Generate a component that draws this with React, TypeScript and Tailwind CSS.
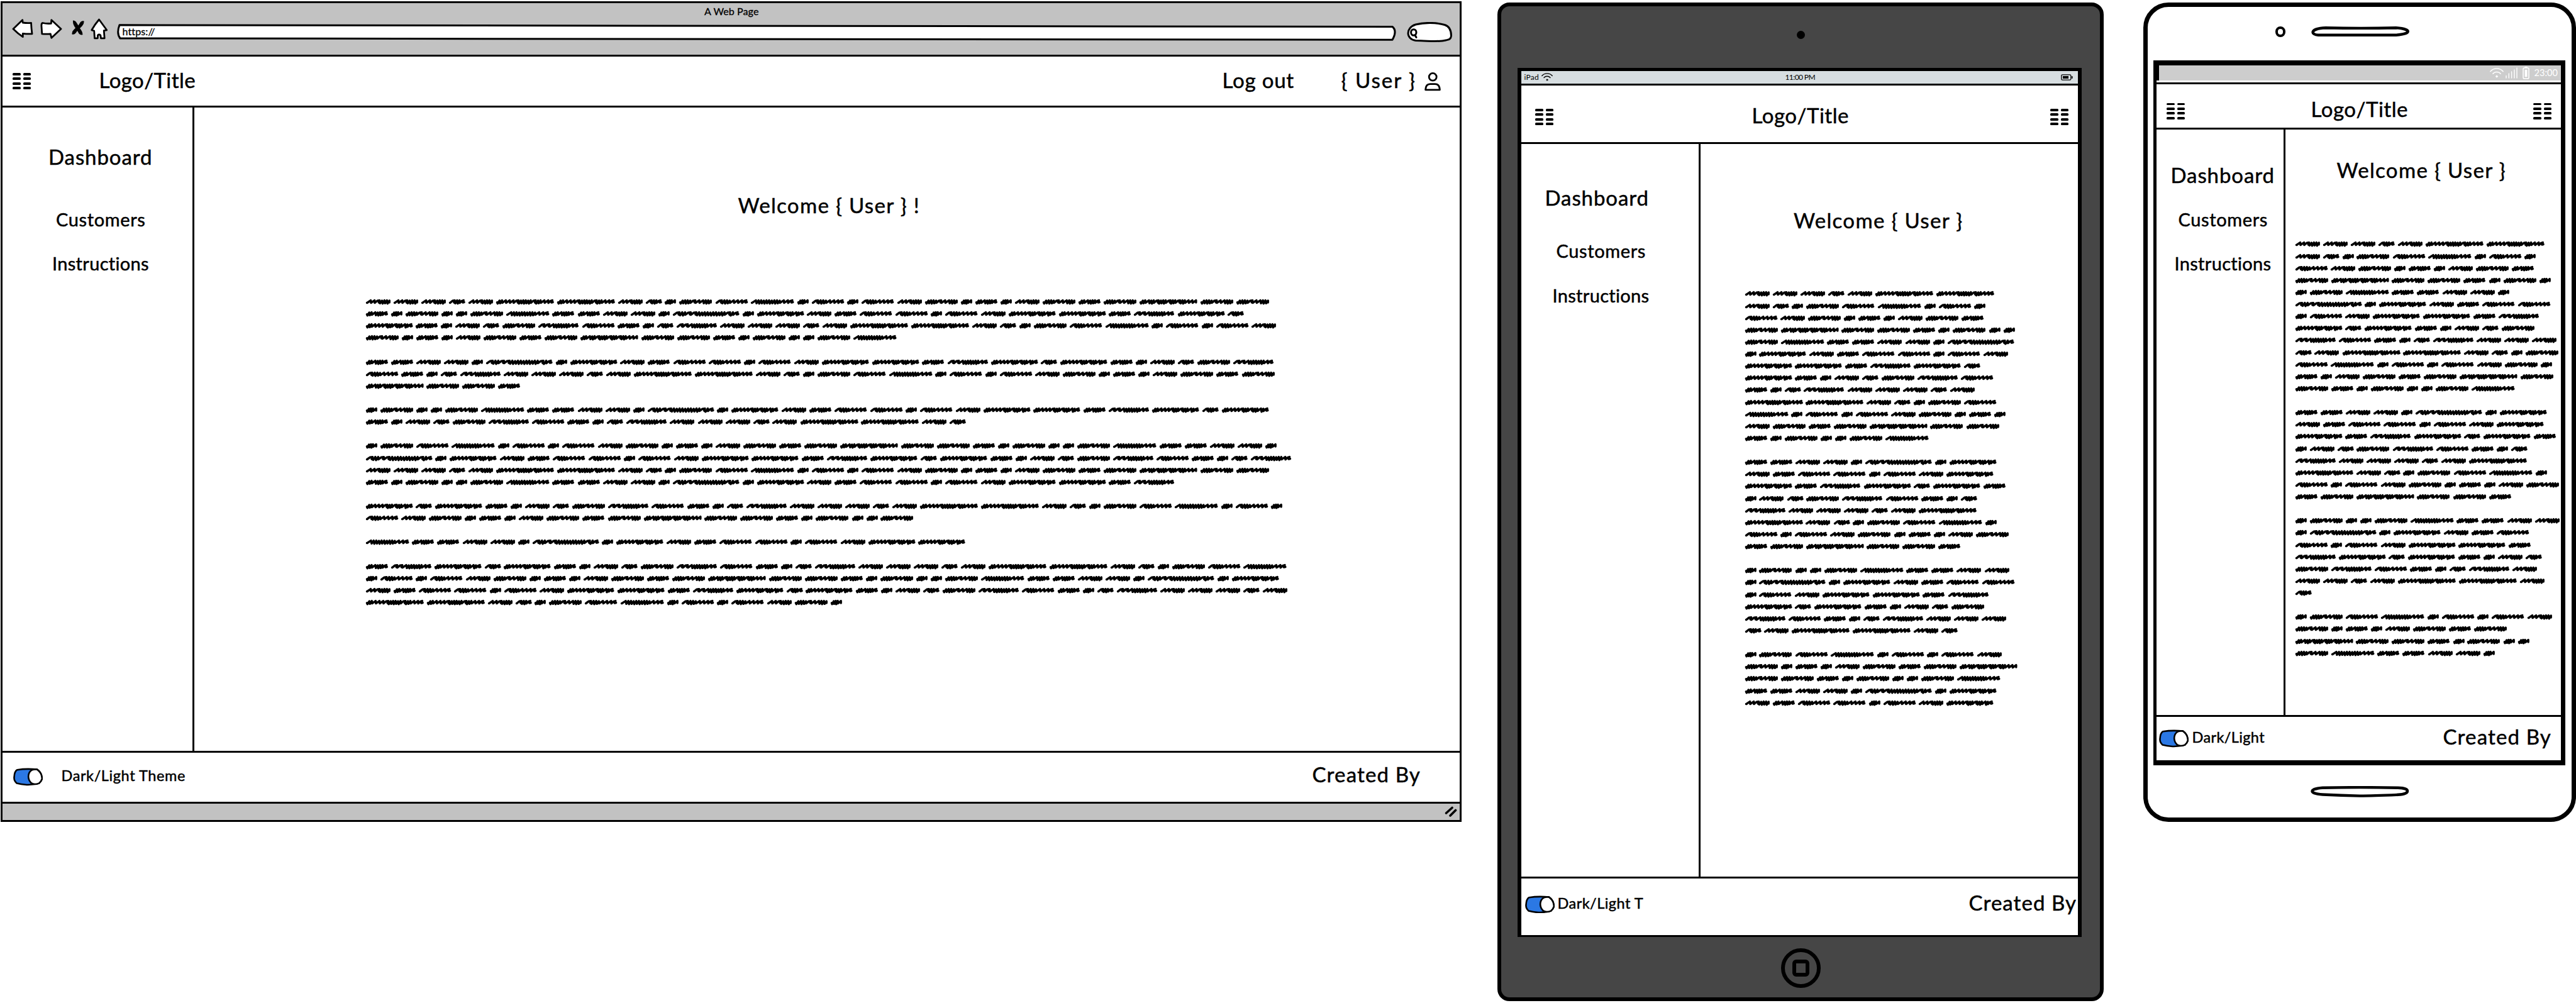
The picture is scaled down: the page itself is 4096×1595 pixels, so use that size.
import { useLayoutEffect, useRef, useState } from "react";
import type { ReactNode } from "react";

/* ---------- text ---------- */

/** A label whose tracking is adjusted so that it spans `w` pixels. */
function Label({ w, className = "", children }: { w: number; className?: string; children: string }) {
  const ref = useRef<HTMLSpanElement>(null);
  const [tracking, setTracking] = useState(0);
  useLayoutEffect(() => {
    const el = ref.current;
    if (!el) return;
    const natural = el.getBoundingClientRect().width - tracking * children.length;
    setTracking((w - natural) / children.length);
  }, [w, children]);
  return (
    <span
      ref={ref}
      className={"inline-block w-max shrink-0 pt-px pl-[1.5px] leading-none whitespace-pre " + className}
      style={{ letterSpacing: tracking + "px" }}
    >
      {children}
    </span>
  );
}

/* ---------- scribbled copy ---------- */

/* n: tight stroke, l: loose slanted stroke, r: flat-topped hump, z: closing hook */
const WORDS: Record<string, { w: number; strokes: string }> = {
  A: { w: 63.8, strokes: "llrnnnn" },
  B: { w: 42, strokes: "rnnz" },
  C: { w: 151.2, strokes: "nnlllrnnnnnrnnllz" },
  D: { w: 29, strokes: "nnnl" },
  E: { w: 85.3, strokes: "nnnnrllnnn" },
  F: { w: 84.3, strokes: "rnnnlllz" },
  G: { w: 112.7, strokes: "lnnnnnnnnnllz" },
  H: { w: 57.3, strokes: "nnlnnnz" },
  J: { w: 150.7, strokes: "nnlnnrnnnrnnrnnlll" },
  K: { w: 122.7, strokes: "nnlllrnnrnnlnz" },
  L: { w: 174, strokes: "rnnrrnnnnnnnnnnrnz" },
  M: { w: 105.3, strokes: "rrlnnnnnnlz" },
};

function scribble(strokes: string, width: number) {
  const step: Record<string, number> = { n: 18, l: 28, r: 36, z: 34 };
  const total = [...strokes].reduce((t, s) => t + step[s], 0);
  const k = (width - 14) / total;
  let x = 0;
  const at = (px: number, y: number) => (7 + px * k).toFixed(1) + " " + y;
  let d = "M" + at(0, strokes[0] === "n" ? 24 : 27);
  let i = 0;
  for (const s of strokes) {
    const dip = i % 2 ? 31 : 33;
    if (s === "n") d += "L" + at(x + 4, dip) + "L" + at(x + 18, i % 3 ? 8 : 10);
    if (s === "l") d += "L" + at(x + 2, 27) + "L" + at(x + 28, 8);
    if (s === "r") d += "L" + at(x + 1, 27) + "L" + at(x + 20, 11) + "L" + at(x + 36, 8) + "L" + at(x + 30, 24);
    if (s === "z") d += "L" + at(x + 1, 28) + "L" + at(x + 16, 13) + "L" + at(x + 30, 8) + "L" + at(x + 24, 25) + "L" + at(x + 34, 22);
    x += step[s];
    i++;
  }
  if (strokes.endsWith("n") || strokes.endsWith("l")) d += "L" + at(x, 25);
  return d;
}

const SHAPES = Object.fromEntries(
  Object.entries(WORDS).map(([k, v]) => [k, { w: v.w, d: scribble(v.strokes, v.w * 3) }]),
);

function Copy({ paragraphs, className = "" }: { paragraphs: string[][]; className?: string }) {
  return (
    <div className={"flex flex-col gap-[19.13px] " + className}>
      {paragraphs.map((lines, p) => (
        <div key={p}>
          {lines.map((line, i) => (
            <div key={i} className="flex h-[19.13px] items-center gap-[5.45px]">
              {[...line].map((c, j) => (
                <svg
                  key={j}
                  className="h-[8.2px] shrink-0 overflow-visible"
                  style={{ width: SHAPES[c].w * 0.60538 }}
                  viewBox={"0 0 " + SHAPES[c].w * 3 + " 40"}
                  preserveAspectRatio="none"
                >
                  <path d={SHAPES[c].d} fill="none" stroke="#000" strokeWidth={17} strokeLinecap="round" strokeLinejoin="round" />
                </svg>
              ))}
            </div>
          ))}
        </div>
      ))}
    </div>
  );
}

const WIDE_COPY = [
  ["AAABACCABDEFGDFDFAEDHDAEHEJEE", "HDEDDEGHHAADLDKAHFFDFAKKHMKB", "KHDABEMFHDBMAAABACCABDEFGDFDFA", "EDHDAEHEJEEHDEDDEG"],
  ["HHAADLDKAHFFDFAKKHMKBKHDABEM", "FHDBMAAABACCABDEFGDFDFAEDHDAEHE", "JEEH"],
  ["DEDDEGHHAADLDKAHFFDFAKKHMKBK", "HDABEMFHDBMAAABACCAB"],
  ["DEFGDFDFAEDHDAEHEJEEHDEDDEGHHAAD", "LDKAHFFDFAKKHMKBKHDABEMFHDBM", "AAABACCABDEFGDFDFAEDHDAEHEJEE", "HDEDDEGHHAADLDKAHFFDFAKKHM"],
  ["KBKHDABEMFHDBMAAABACCABDEFGDFD", "FAEDHDAEHEJEEHDEDDE"],
  ["GHHAADLDKAHFFDFAKK"],
  ["HMKBKHDABEMFHDBMAAABACCABDEFG", "DFDFAEDHDAEHEJEEHDEDDEGHHAADLDK", "AHFFDFAKKHMKBKHDABEMFHDBMAAABA", "CCABDEFGDFDFAED"],
];

const TABLET_COPY = [
  ["AAABACC", "ABDEFGDFD", "FAEDHDAEH", "EJEEHDEDD", "EGHHAADL", "DKAHFFDFA", "KKHMKB", "KHDABEMF", "HDBMAAABA", "CCABDEF", "GDFDFAEDHD", "AEHEJEE", "HDEDDEG"],
  ["HHAADLDK", "AHFFDFAK", "KHMKBKH", "DABEMFHDB", "MAAABAC", "CABDEFGD", "FDFAEDHDAE", "HEJEEH"],
  ["DEDDEGHHAA", "DLDKAHFF", "DFAKKHM", "KBKHDABE", "MFHDBMAAA", "BACCAB"],
  ["DEFGDFDFA", "EDHDAEHEJ", "EEHDEDDEG", "HHAADLDK", "AHFFDFAK"],
];

const PHONE_COPY = [
  ["AAABACC", "ABDEFGDFD", "FAEDHDAEH", "EJEEHDED", "DEGHHAAD", "LDKAHFF", "DFAKKHM", "KBKHDABE", "MFHDBMAAA", "BACCABDE", "FGDFDFAED", "HDAEHEJE", "EHDEDDEG"],
  ["HHAADLDK", "AHFFDFAK", "KHMKBKH", "DABEMFHDB", "MAAABAC", "CABDEFGD", "FDFAEDHDAE", "HEJEEH"],
  ["DEDDEGHHAA", "DLDKAHF", "FDFAKKH", "MKBKHDAB", "EMFHDBMA", "AABACCA", "B"],
  ["DEFGDFDFA", "EDHDAEHE", "JEEHDEDD", "EGHHAAD"],
];

/* ---------- icons ---------- */

function GridIcon({ className = "" }: { className?: string }) {
  return (
    <div className={"grid h-[26px] w-[29px] shrink-0 grid-cols-2 gap-x-[4px] gap-y-[3.7px] " + className}>
      {Array.from({ length: 8 }, (_, i) => (
        <div key={i} className="rounded-[1.6px] bg-black" />
      ))}
    </div>
  );
}

function Toggle({ className = "" }: { className?: string }) {
  return (
    <svg className={"h-[28.5px] w-[47.5px] shrink-0 " + className} viewBox="0 0 47.5 28.5" fill="none" stroke="#000" strokeWidth="2.6" strokeLinejoin="round">
      <path d="M6.3 3.2Q21 .8 38 2.6Q43.5 6.500 45 12L46 17.200Q44.500 22 41 24.600Q31 27.400 21.300 27Q12 26.500 5.600 24.600Q1 20.500 1.500 15Q2 5.500 6.300 3.200Z" fill="#2b78e4" />
      <path d="M38 2.600Q43.500 6.500 45 12L46 17.200Q44.500 22 41 24.600Q33.500 27.800 28.500 24Q24 19.500 24.200 13.500Q24.500 6.500 29.500 3.600Q33.500 1.800 38 2.600Z" fill="#fff" />
    </svg>
  );
}

function PersonIcon({ className = "" }: { className?: string }) {
  return (
    <svg className={"h-[30px] w-[26px] shrink-0 " + className} viewBox="0 0 26 30" fill="none" stroke="#000" strokeWidth="2.8" strokeLinejoin="round">
      <ellipse cx="13.200" cy="7.300" rx="6" ry="5.900" />
      <path d="M1.600 27.800C1.900 22 4.500 18.700 9 18.700H17C21.500 18.700 24.100 22 24.400 27.800Z" />
    </svg>
  );
}

function Wifi({ className = "" }: { className?: string }) {
  return (
    <svg className={"shrink-0 " + className} viewBox="0 0 18 13" fill="none" stroke="currentColor" strokeWidth="1.300" strokeLinecap="round" preserveAspectRatio="none">
      <path d="M.8 4.500C5 -.4 13 -.4 17.200 4.500M4 7.500C6.500 4.500 11.500 4.500 14 7.500" />
      <circle cx="9" cy="11" r="1.100" fill="currentColor" strokeWidth=".8" />
    </svg>
  );
}

/* ---------- shared pieces ---------- */

function Menu({ d, c, i }: { d: string; c: string; i: string }) {
  return (
    <nav className="flex flex-col items-start [-webkit-text-stroke:0.5px]">
      <Label w={167} className={"text-[33px] " + d}>Dashboard</Label>
      <Label w={144} className={"text-[29px] " + c}>Customers</Label>
      <Label w={156} className={"mt-[40.5px] text-[29px] " + i}>Instructions</Label>
    </nav>
  );
}

function Row({ className = "", children }: { className?: string; children: ReactNode }) {
  return (
    <div className={"flex shrink-0 items-start border-black bg-white [-webkit-text-stroke:0.5px] " + className}>
      {children}
    </div>
  );
}

/* ---------- devices ---------- */

function BrowserWindow() {
  return (
    <section className="mt-[2px] ml-px flex h-[1305px] w-[2323px] shrink-0 flex-col border-3 border-black bg-white">
      <div className="flex h-[85px] shrink-0 flex-col border-b-3 border-black bg-[#c2c2c2]">
        <div className="mt-[4px] flex h-5 justify-center">
          <Label w={88} className="text-[16px] [-webkit-text-stroke:0.3px]">A Web Page</Label>
        </div>
        <div className="flex items-start">
          <svg className="mt-px ml-[15px] h-8 w-[34px] shrink-0" viewBox="0 0 34 32" fill="#fff" stroke="#000" strokeWidth="2.800" strokeLinejoin="round">
            <path d="M2 16L16.700 1.700L17.200 6Q24 7 30.500 6.400Q30.800 15 32 23.800Q25 24.300 17.300 23.300V28.700Q9 23 2 16Z" />
          </svg>
          <svg className="mt-px ml-[11px] h-8 w-[35px] shrink-0" viewBox="0 0 35 32" fill="#fff" stroke="#000" strokeWidth="2.800" strokeLinejoin="round">
            <path d="M33 16L17.800 1.700L17.300 7.300Q10 8 4 6.500Q1.500 6.800 2 12L2.800 23.900Q10 24.500 16.300 23.800L17.800 30.300Z" />
          </svg>
          <svg className="mt-[3px] ml-[15px] h-6 w-5 shrink-0" viewBox="0 0 20 24">
            <path d="M2 .5Q6 .5 8 4.500L10.500 8.500L14 3Q16.500 .5 19.500 1.500Q20 6 16.500 9.500L13 13Q17 17.500 17.500 23Q14.500 24.500 11.500 21.500L9 17L6.500 20.500Q4 23.500 .5 22.500Q0 18 3.500 15L6 12.500Q1.500 7 2 .5Z" />
          </svg>
          <svg className="ml-[10px] h-[34px] w-7 shrink-0" viewBox="0 0 28 34" fill="#fff" stroke="#000" strokeWidth="2.800" strokeLinejoin="round">
            <path d="M13.500 2Q19 9.500 25.700 18.800L21.200 19.600L22.200 31.800H16.500L15.800 27Q13.500 25 11.500 27L11.300 31.800H6.500L5.700 20L1.800 18.800Q7 9.500 13.500 2Z" />
          </svg>
          <div className="relative mt-[9px] ml-[14px] h-[27px] w-[2034px] shrink-0">
            <svg className="absolute inset-0 h-full w-full" viewBox="0 0 2034 27" fill="#fff" stroke="#000" strokeWidth="3" strokeLinejoin="round">
              <path d="M4 1.800L2028 4.500Q2036 11 2028 25.300L5 23Q-1 15 4 1.800Z" />
            </svg>
            <div className="relative flex items-start pt-[2.500px] pl-[7px]">
              <Label w={53} className="text-[16px] [-webkit-text-stroke:0.3px]">https://</Label>
            </div>
          </div>
          <svg className="mt-[6px] ml-[17px] h-[32px] w-[73px] shrink-0" viewBox="0 0 73 32" fill="#fff" stroke="#000" strokeWidth="3" strokeLinejoin="round" strokeLinecap="round">
            <path d="M14 29.500C-2 27 -2 9 14 4C28 .5 46 .5 60 4.500C70 7.500 70.500 17 70.500 22C70 28 66 28 62 29C50 32 38 30 14 29.500Z" />
            <ellipse cx="10.800" cy="16.500" rx="4.200" ry="4.800" />
            <path d="M13 21L15 24.500" />
          </svg>
        </div>
      </div>

      <Row className="h-[81px] border-b-3 pt-5 pl-4">
        <GridIcon className="mt-[6px]" />
        <Label w={155} className="ml-[107px] text-[33px]">Logo/Title</Label>
        <Label w={116} className="ml-auto text-[33px]">Log out</Label>
        <Label w={121} className="ml-[73px] text-[33px]">{"{ User }"}</Label>
        <PersonIcon className="mt-[5px] mr-[30px] ml-[13px]" />
      </Row>

      <div className="flex h-[1023px] shrink-0">
        <aside className="w-[305px] shrink-0 border-r-3 border-black">
          <Menu d="ml-[71.500px] mt-[61px]" c="ml-[83.500px] mt-[66.500px]" i="ml-[77.500px]" />
        </aside>
        <main className="flex flex-col items-start">
          <Label w={291} className="mt-[137.500px] ml-[863px] text-[33px] [-webkit-text-stroke:0.5px]">{"Welcome { User } !"}</Label>
          <Copy paragraphs={WIDE_COPY} className="mt-[128px] ml-[272.600px]" />
        </main>
      </div>

      <Row className="h-[81px] border-t-3">
        <Toggle className="mt-[24px] ml-[16.500px]" />
        <Label w={199} className="mt-[24px] ml-[28px] text-[23.500px]">Dark/Light Theme</Label>
        <Label w={174} className="mt-[17px] mr-[62px] ml-auto text-[33px]">Created By</Label>
      </Row>
      <div className="flex flex-1 items-start justify-end border-t-3 border-black bg-[#c2c2c2]">
        <svg className="mt-[3px] mr-[4px] h-[19px] w-[20px]" viewBox="0 0 20 19" stroke="#000" strokeWidth="3.600" strokeLinecap="round">
          <path d="M2.500 12L12 3.500M9 16L17.500 7.500" />
        </svg>
      </div>
    </section>
  );
}

function Tablet() {
  return (
    <section className="mt-[3.500px] ml-[57px] flex h-[1588px] w-[964px] shrink-0 flex-col rounded-[19px] border-6 border-black bg-[#464646]">
      <div className="flex h-[98px] shrink-0 justify-center pt-[39.500px]">
        <div className="h-[13px] w-[13px] rounded-full bg-black" />
      </div>
      <div className="ml-[26px] flex h-[1382px] w-[897px] shrink-0 flex-col border-x-6 border-t-5 border-b-3 border-black bg-white">
        <div className="grid h-[23px] shrink-0 grid-cols-3 items-center border-b-3 border-black bg-[#d7dee1]">
          <div className="flex items-center pl-[3px]">
            <Label w={25} className="text-[12px]">iPad</Label>
            <Wifi className="ml-[4px] h-[13px] w-[18px]" />
          </div>
          <div className="flex justify-center">
            <Label w={49} className="text-[12px]">11:00 PM</Label>
          </div>
          <svg className="mr-[8px] h-[10px] w-[19px] justify-self-end" viewBox="0 0 19 10">
            <rect x=".8" y=".8" width="15" height="8.400" rx="1.500" fill="none" stroke="#000" strokeWidth="1.300" />
            <rect x="3" y="3" width="9" height="4" />
            <rect x="16.800" y="3" width="1.800" height="4" rx=".8" />
          </svg>
        </div>
        <Row className="h-[93px] border-b-3">
          <GridIcon className="mt-[37.500px] ml-[22px]" />
          <Label w={156} className="mt-[30px] ml-[314px] text-[33px]">Logo/Title</Label>
          <GridIcon className="mt-[37.500px] mr-[15px] ml-auto" />
        </Row>
        <div className="flex h-[1165px] shrink-0">
          <aside className="w-[284.500px] shrink-0 border-r-3 border-black">
            <Menu d="ml-[36px] mt-[68px]" c="ml-[54px] mt-[52.500px]" i="ml-[48px]" />
          </aside>
          <main className="flex flex-col items-start">
            <Label w={271} className="mt-[104px] ml-[147px] text-[33px] [-webkit-text-stroke:0.5px]">{"Welcome { User }"}</Label>
            <Copy paragraphs={TABLET_COPY} className="mt-[91.500px] ml-[71px]" />
          </main>
        </div>
        <Row className="h-[93px] border-t-3">
          <Toggle className="mt-[27px] ml-[5.500px]" />
          <Label w={138} className="mt-[27.500px] ml-[3px] text-[23.500px]">Dark/Light T</Label>
          <Label w={173} className="mt-[21px] mr-[2px] ml-auto text-[33px]">Created By</Label>
        </Row>
      </div>
      <div className="mt-[18px] flex h-[63px] w-[63px] items-center justify-center self-center rounded-full border-6 border-black">
        <div className="h-[27px] w-[27px] rounded-[6px] border-6 border-black" />
      </div>
    </section>
  );
}

function Phone() {
  return (
    <section className="mt-[3.500px] ml-[63px] flex h-[1303px] w-[688px] shrink-0 flex-col rounded-[40px] border-7 border-black bg-white">
      <div className="flex h-[85px] shrink-0 items-start gap-[40px] pt-[31.500px] pl-[203px]">
        <div className="h-[17px] w-[16px] rounded-full border-[4.500px] border-black" />
        <svg className="h-[16px] w-[158px]" viewBox="0 0 158 16" fill="none" stroke="#000" strokeWidth="4.400" strokeLinejoin="round">
          <path d="M24 2.300Q80 3.500 136 2.300C161 4 161 12 136 13.700H12C1 13.500 -3 3.500 24 2.300Z" />
        </svg>
      </div>
      <div className="ml-[9px] flex h-[1121px] w-[655px] shrink-0 flex-col border-y-8 border-r-7 border-l-5 border-black bg-white">
        <div className="mb-[3px] flex h-6 shrink-0 items-center justify-end border-l-4 border-black bg-[#cdcdcd] pr-[5px] text-white">
          <Wifi className="h-[16px] w-[22px]" />
          <svg className="ml-[3px] h-[18px] w-[19px]" viewBox="0 0 19 18" stroke="#fff" strokeWidth="1.400" strokeLinecap="round">
            <path d="M1 13.500V17M5.300 10V17M9.600 7V17M13.900 4V17M18 1V17" />
          </svg>
          <svg className="ml-[8px] h-[20px] w-[11px]" viewBox="0 0 11 20">
            <rect x="1" y="2" width="9" height="17" rx="1.800" fill="none" stroke="#fff" strokeWidth="1.500" />
            <rect x="3.500" y="4.800" width="4" height="11.500" fill="#fff" />
            <rect x="3.500" y="0" width="4" height="2" fill="#fff" />
          </svg>
          <Label w={39} className="ml-[6px] text-[14.500px]">23:00</Label>
        </div>
        <Row className="h-[75px] border-y-3">
          <GridIcon className="mt-[30px] ml-[16px]" />
          <Label w={156} className="mt-[22px] ml-[199px] text-[33px]">Logo/Title</Label>
          <GridIcon className="mt-[30px] mr-[15px] ml-auto" />
        </Row>
        <div className="flex h-[931px] shrink-0">
          <aside className="w-[205px] shrink-0 border-r-3 border-black">
            <Menu d="ml-[21px] mt-[55px]" c="ml-[33px] mt-[38px]" i="ml-[27px]" />
          </aside>
          <main className="flex flex-col items-start">
            <Label w={271} className="mt-[47.500px] ml-[80px] text-[33px] [-webkit-text-stroke:0.5px]">{"Welcome { User }"}</Label>
            <Copy paragraphs={PHONE_COPY} className="mt-[92px] ml-[15.600px]" />
          </main>
        </div>
        <Row className="h-[72px] border-t-3">
          <Toggle className="mt-[20.500px] ml-[3.500px]" />
          <Label w={117} className="mt-[20px] ml-[4px] text-[23.500px]">Dark/Light</Label>
          <Label w={174} className="mt-[14.500px] mr-[15px] ml-auto text-[33px]">Created By</Label>
        </Row>
      </div>
      <svg className="mt-[33px] h-[18px] w-[158px] self-center" viewBox="0 0 158 18" fill="none" stroke="#000" strokeWidth="4.400" strokeLinejoin="round">
        <path d="M20 2.800Q80 1.500 140 2.800C160 3 160 13 140 13.800Q100 15.500 79 15.600Q50 15 20 13.500C-2 12 -2 4.500 20 2.800Z" />
      </svg>
    </section>
  );
}

export default function App() {
  return (
    <div className="flex h-[1595px] w-[4096px] items-start overflow-hidden bg-white font-[Lato,sans-serif] text-black">
      <BrowserWindow />
      <Tablet />
      <Phone />
    </div>
  );
}
